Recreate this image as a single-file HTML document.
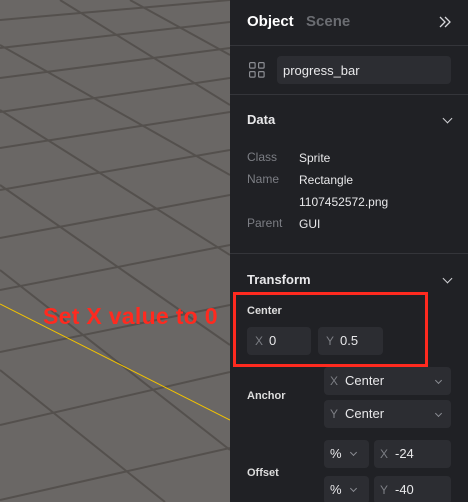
<!DOCTYPE html>
<html><head><meta charset="utf-8"><style>
*{margin:0;padding:0;box-sizing:border-box}
body{width:468px;height:502px;overflow:hidden;position:relative;background:#6a6765;font-family:"Liberation Sans",sans-serif}
.p{position:absolute;left:230px;top:0;width:238px;height:502px;background:#202125;color:#e8e8ea;overflow:hidden}
.a{position:absolute;white-space:nowrap}
.sep{position:absolute;left:0;width:238px;height:1px;background:#34353a}
.box{position:absolute;background:#2c2d32;border-radius:4px}
.lab{color:#7c7e84;font-size:12px}
.val{font-size:12px;color:#e8e8ea}
.chev{position:absolute;width:7px;height:7px;border-right:1.5px solid #d0d0d4;border-bottom:1.5px solid #d0d0d4;transform:rotate(45deg)}
.sc{position:absolute;width:5px;height:5px;border-right:1.2px solid #8a8c92;border-bottom:1.2px solid #8a8c92;transform:rotate(45deg)}
</style></head><body>
<svg width="230" height="502" style="position:absolute;left:0;top:0">
<g stroke="#54504d" stroke-width="2" fill="none">
<line x1="0" y1="20" x2="230" y2="0"/>
<line x1="0" y1="48" x2="230" y2="22"/>
<line x1="0" y1="78" x2="230" y2="48"/>
<line x1="0" y1="112" x2="230" y2="78"/>
<line x1="0" y1="148" x2="230" y2="112"/>
<line x1="0" y1="190" x2="230" y2="150"/>
<line x1="0" y1="238" x2="230" y2="195"/>
<line x1="0" y1="290" x2="230" y2="245"/>
<line x1="0" y1="352" x2="230" y2="305"/>
<line x1="0" y1="425" x2="230" y2="372"/>
<line x1="0" y1="500" x2="230" y2="448"/>
<line x1="0" y1="45" x2="230" y2="175"/>
<line x1="0" y1="110" x2="230" y2="255"/>
<line x1="0" y1="185" x2="230" y2="345"/>
<line x1="0" y1="270" x2="230" y2="450"/>
<line x1="0" y1="370" x2="165" y2="502"/>
<line x1="60" y1="0" x2="230" y2="105"/>
<line x1="130" y1="0" x2="230" y2="55"/>
</g>
<line x1="0" y1="304" x2="230" y2="420" stroke="#f2c200" stroke-width="1"/>
</svg>
<div class="a" style="left:43px;top:303px;font-size:23px;font-weight:bold;color:#ff2a1f;letter-spacing:0.3px">Set X value to 0</div>
<div class="p">
<div class="a" style="left:17px;top:13px;font-size:15px;font-weight:bold;color:#fff">Object</div>
<div class="a" style="left:76px;top:13px;font-size:15px;font-weight:bold;color:#6b6d72">Scene</div>
<svg class="a" style="left:208px;top:15px" width="14" height="14"><path d="M2 2l5 5-5 5M7 2l5 5-5 5" stroke="#d8d8dc" stroke-width="1.3" fill="none"/></svg>
<div class="sep" style="top:45px"></div>
<svg class="a" style="left:19px;top:62px" width="16" height="16"><g stroke="#8a8c92" stroke-width="1.2" fill="none"><rect x="0.6" y="0.6" width="5.5" height="5.5" rx="1"/><rect x="9.6" y="0.6" width="5.5" height="5.5" rx="1"/><rect x="0.6" y="9.6" width="5.5" height="5.5" rx="1"/><rect x="9.6" y="9.6" width="5.5" height="5.5" rx="1"/></g></svg>
<div class="box" style="left:47px;top:56px;width:174px;height:28px"></div>
<div class="a" style="left:53px;top:63px;font-size:13px">progress_bar</div>
<div class="sep" style="top:94px"></div>
<div class="a" style="left:17px;top:112px;font-size:13px;font-weight:bold">Data</div>
<div class="chev" style="left:214px;top:115px"></div>
<div class="a lab" style="left:17px;top:150px">Class</div><div class="a val" style="left:69px;top:151px">Sprite</div>
<div class="a lab" style="left:17px;top:172px">Name</div><div class="a val" style="left:69px;top:173px">Rectangle</div>
<div class="a val" style="left:69px;top:195px">1107452572.png</div>
<div class="a lab" style="left:17px;top:216px">Parent</div><div class="a val" style="left:69px;top:217px">GUI</div>
<div class="sep" style="top:253px"></div>
<div class="a" style="left:17px;top:272px;font-size:13px;font-weight:bold">Transform</div>
<div class="chev" style="left:214px;top:275px"></div>
<div class="a" style="left:17px;top:305px;font-size:11px;font-weight:bold;color:#ddd">Center</div>
<div class="box" style="left:17px;top:327px;width:64px;height:28px"></div>
<div class="a lab" style="left:25px;top:334px">X</div><div class="a" style="left:39px;top:333px;font-size:13px">0</div>
<div class="box" style="left:88px;top:327px;width:65px;height:28px"></div>
<div class="a lab" style="left:96px;top:334px">Y</div><div class="a" style="left:110px;top:333px;font-size:13px">0.5</div>
<div class="a" style="left:3px;top:292px;width:195px;height:75px;border:3px solid #ff2a1f"></div>
<div class="a" style="left:17px;top:390px;font-size:11px;font-weight:bold;color:#ddd">Anchor</div>
<div class="box" style="left:94px;top:367px;width:127px;height:28px"></div>
<div class="a lab" style="left:100px;top:374px">X</div><div class="a" style="left:115px;top:373px;font-size:13px">Center</div><div class="sc" style="left:206px;top:378px"></div>
<div class="box" style="left:94px;top:400px;width:127px;height:28px"></div>
<div class="a lab" style="left:100px;top:407px">Y</div><div class="a" style="left:115px;top:406px;font-size:13px">Center</div><div class="sc" style="left:206px;top:411px"></div>
<div class="a" style="left:17px;top:467px;font-size:11px;font-weight:bold;color:#ddd">Offset</div>
<div class="box" style="left:94px;top:440px;width:45px;height:28px"></div>
<div class="a" style="left:100px;top:446px;font-size:13px">%</div><div class="sc" style="left:121px;top:450px"></div>
<div class="box" style="left:144px;top:440px;width:77px;height:28px"></div>
<div class="a lab" style="left:150px;top:447px">X</div><div class="a" style="left:165px;top:446px;font-size:13px">-24</div>
<div class="box" style="left:94px;top:476px;width:45px;height:28px"></div>
<div class="a" style="left:100px;top:482px;font-size:13px">%</div><div class="sc" style="left:121px;top:486px"></div>
<div class="box" style="left:144px;top:476px;width:77px;height:28px"></div>
<div class="a lab" style="left:150px;top:483px">Y</div><div class="a" style="left:165px;top:482px;font-size:13px">-40</div>
</div>
</body></html>
